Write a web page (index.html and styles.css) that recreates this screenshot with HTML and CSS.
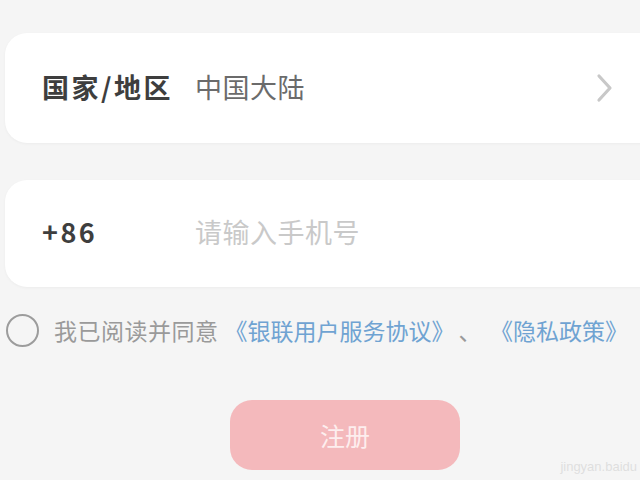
FILE: index.html
```html
<!DOCTYPE html>
<html lang="zh-CN">
<head>
<meta charset="utf-8">
<title>注册</title>
<link rel="stylesheet" href="styles.css">
</head>
<body>
<div class="page">
  <div class="card card-region">
    <span class="label">国家/地区</span>
    <span class="value">中国大陆</span>
    <svg class="chevron" width="20" height="30" viewBox="0 0 20 30"><path d="M4 3 L15 15 L4 27" fill="none" stroke="#c8c8c8" stroke-width="3.2" stroke-linecap="round" stroke-linejoin="round"/></svg>
  </div>
  <div class="card card-phone">
    <span class="label">+86</span>
    <span class="placeholder">请输入手机号</span>
  </div>
  <div class="agree">
    <span class="radio"></span>
    <span class="agree-text">我已阅读并同意<span class="link first">《银联用户服务协议》</span><span class="sep">、</span><span class="link">《隐私政策》</span></span>
  </div>
  <div class="btn-row">
    <div class="btn">注册</div>
  </div>
  <div class="watermark">jingyan.baidu</div>
</div>
</body>
</html>
```
FILE: styles.css
```css
html, body {
  margin: 0;
  padding: 0;
  background: #f5f5f5;
  width: 640px;
  height: 480px;
  overflow: hidden;
  font-family: "Noto Sans CJK SC", "Noto Sans", sans-serif;
}
.page {
  position: relative;
  width: 640px;
  height: 480px;
  overflow: hidden;
  padding-top: 33px;
  box-sizing: border-box;
}
.card {
  margin-left: 5px;
  width: 680px;
  background: #ffffff;
  border-radius: 22px;
  box-shadow: 0 1px 3px rgba(0,0,0,0.04);
  display: flex;
  align-items: center;
  padding-left: 37px;
  box-sizing: border-box;
}
.card-region {
  height: 110px;
}
.card-phone {
  height: 107px;
  margin-top: 37px;
}
.label {
  width: 153px;
  font-size: 27px;
  font-weight: 700;
  color: #3e3e3e;
  letter-spacing: 2.5px;
  line-height: 1;
  padding-bottom: 4px;
}
.value {
  font-size: 27px;
  color: #6b6b6b;
  flex: 0 0 auto;
  width: 400px;
  letter-spacing: 0.5px;
  line-height: 1;
  padding-bottom: 4px;
}
.chevron {
  flex: 0 0 auto;
}
.placeholder {
  font-size: 27px;
  color: #c9c9c9;
  letter-spacing: 0.5px;
  line-height: 1;
  padding-bottom: 4px;
}
.agree {
  display: flex;
  align-items: center;
  margin-top: 26px;
  height: 34px;
  padding-left: 6px;
}
.radio {
  width: 33px;
  height: 33px;
  border: 2.5px solid #9c9c9c;
  border-radius: 50%;
  box-sizing: border-box;
  flex: 0 0 auto;
}
.agree-text {
  margin-left: 15px;
  font-size: 23px;
  color: #9a9a9a;
  white-space: nowrap;
  letter-spacing: 0.5px;
}
.link {
  color: #6fa3d2;
  letter-spacing: 0;
}
.link.first {
  margin-left: 6px;
}
.sep {
  display: inline-block;
  margin: 0 8px 0 4px;
}
.btn-row {
  display: flex;
  margin-top: 53px;
  padding-left: 230px;
}
.btn {
  width: 230px;
  height: 70px;
  border-radius: 22px;
  background: #f4b9bc;
  color: #fdeeee;
  font-size: 25px;
  display: flex;
  align-items: center;
  justify-content: center;
}
.watermark {
  position: absolute;
  right: 3px;
  bottom: 6px;
  font-size: 13px;
  color: rgba(200,200,200,0.5);
  font-family: "Liberation Sans", sans-serif;
}
```
